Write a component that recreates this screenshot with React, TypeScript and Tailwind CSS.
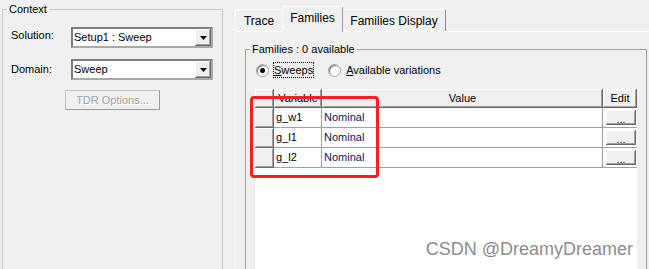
import React from "react";

const raised =
  "bg-[#f0f0f0] shadow-[inset_-1px_-1px_0_#696969,inset_1px_1px_0_#ffffff,inset_-2px_-2px_0_#a0a0a0]";

const Combo = ({ value }: { value: string }) => {
  return (
    <div className="w-[142px] h-[21px] border-2 border-t-[#7e7e7e] border-l-[#7e7e7e] border-r-[#a9a9a9] border-b-[#a9a9a9] bg-white flex items-center">
      <span className="flex-1 pl-[1px] leading-[15px]">{value}</span>
      <div className={`w-[16px] h-[17px] flex items-center justify-center ${raised}`}>
        <svg width="7" height="4" viewBox="0 0 7 4">
          <polygon points="0,0 7,0 3.5,4" fill="#000" />
        </svg>
      </div>
    </div>
  );
};

const Radio = ({ checked }: { checked?: boolean }) => (
  <span className="w-[13px] h-[13px] rounded-full bg-white border border-[#a0a0a0] shadow-[inset_1px_1px_0_#7a7a7a] flex items-center justify-center">
    {checked && <span className="w-[5px] h-[5px] rounded-full bg-black" />}
  </span>
);

const rows = ["g_w1", "g_l1", "g_l2"];

const App = () => {
  return (
    <div className="relative w-[649px] h-[269px] overflow-hidden bg-[#f0f0f0] flex font-['Liberation_Sans',Arial,sans-serif] text-[11px] text-black">
      {/* left side: context */}
      <div className="w-[230px] shrink-0 pt-[3px] pl-[2px]">
        <fieldset className="w-[221px] h-[300px] border border-[#c9c9c9]">
          <legend className="ml-[4px] px-[2px] leading-[13px]">Context</legend>
          <div className="pl-[8px] pt-[11px] flex flex-col">
            <div className="flex items-center h-[21px]">
              <span className="w-[60px] -mt-[5px]">Solution:</span>
              <Combo value="Setup1 : Sweep" />
            </div>
            <div className="flex items-center h-[21px] mt-[11px]">
              <span className="w-[60px]">Domain:</span>
              <Combo value="Sweep" />
            </div>
            <div className="mt-[10px] ml-[54px] w-[95px] h-[20px] border border-[#c2c2c2] border-r-[#9a9a9a] border-b-[#9a9a9a] bg-[#f0f0f0] flex items-center justify-center text-[#a0a0a0] [text-shadow:1px_1px_0_#ffffff]">
              TDR Options...
            </div>
          </div>
        </fieldset>
      </div>

      {/* right side: tabs */}
      <div className="flex-1 pl-[5px]">
        <div className="flex items-end h-[31px] text-[12px]">
          <div className="w-[48px] h-[22px] border-t border-l border-white border-r border-r-[#a0a0a0] rounded-t-[2px] flex items-center justify-center">
            Trace
          </div>
          <div className="relative z-10 -ml-px -mb-px w-[61px] h-[26px] bg-[#f0f0f0] border-t border-l border-white border-r border-r-[#a0a0a0] rounded-t-[2px] flex items-center justify-center pb-[3px]">
            Families
          </div>
          <div className="-ml-px w-[104px] h-[22px] border-t border-l border-white border-r border-r-[#8a8a8a] rounded-t-[2px] flex items-center justify-center">
            Families Display
          </div>
        </div>

        <div className="border-t border-l border-white h-[240px] pl-[9px]">
          <fieldset className="mt-[11px] w-[402px] h-[260px] border border-[#a0a0a0]">
            <legend className="ml-[4px] px-[2px] leading-[13px]">Families : 0 available</legend>
            <div className="mt-[5px] h-[18px] pl-[10px] flex items-center">
              <Radio checked />
              <span className="ml-[4px] border border-dotted border-black leading-[14px]">
                <span className="underline">S</span>weeps
              </span>
              <span className="ml-[14px]">
                <Radio />
              </span>
              <span className="ml-[5px]">
                <span className="underline">A</span>vailable variations
              </span>
            </div>

            <div className="mt-[10px] ml-[9px] w-[382px] h-[200px] bg-white">
              <div className="grid grid-cols-[19px_48px_281px_34px] h-[19px]">
                <div className={raised} />
                <div className={`${raised} flex items-center justify-center`}>Variable</div>
                <div className={`${raised} flex items-center justify-center`}>Value</div>
                <div className={`${raised} flex items-center justify-center`}>Edit</div>
              </div>
              {rows.map((name) => (
                <div key={name} className="grid grid-cols-[19px_48px_281px_34px] h-[20px]">
                  <div className={raised} />
                  <div className="border-r border-b border-[#a0a0a0] pl-[2px] flex items-center">{name}</div>
                  <div className="border-r border-b border-[#a0a0a0] pl-[2px] flex items-center text-[#10106a]">
                    Nominal
                  </div>
                  <div className="border-b border-[#a0a0a0]">
                    <div className={`ml-[3px] mt-[2px] w-[30px] h-[15px] flex items-end justify-center leading-[12px] text-[#1a1a8c] ${raised}`}>
                      ...
                    </div>
                  </div>
                </div>
              ))}
            </div>
          </fieldset>
        </div>
      </div>

      {/* annotation */}
      <div className="absolute left-[250px] top-[96px] w-[129px] h-[82px] border-[3px] border-[#ff1e1e] rounded-[4px]" />
      <div className="absolute top-[240px] right-[16px] text-[18px] leading-[18px] text-[#8c8c8c] [text-shadow:0_0_1px_#ffffff]">
        CSDN @DreamyDreamer
      </div>
    </div>
  );
};

export default App;
